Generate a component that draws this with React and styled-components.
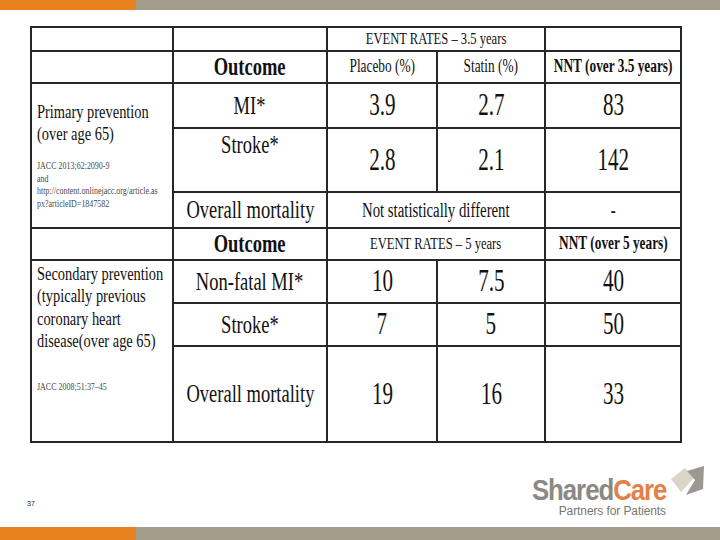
import React from "react"
import styled, { createGlobalStyle } from "styled-components"

const GlobalStyle = createGlobalStyle`
  html, body {
    margin: 0;
    padding: 0;
    background: #fff;
  }
  body {
    font-family: "Liberation Serif", "Times New Roman", serif;
    color: #111;
  }
`

const Page = styled.div`
  width: 720px;
  height: 540px;
  display: flex;
  flex-direction: column;
  overflow: hidden;
  background: #fff;
`

// orange + grey strip, top and bottom
const Bar = styled.div`
  height: ${p => p.h}px;
  flex-shrink: 0;
  background: linear-gradient(to right, #e8821f 0, #e8821f 136px, #a39b8b 136px);
`

const Main = styled.div`
  flex: 1;
  padding: 16px 0 0 30px;
`

const Grid = styled.div`
  display: grid;
  width: 648px;
  grid-template-columns: 140px 152px 108px 106px 134px;
  grid-template-rows: 22px 30px 43px 62px 34px 30px 41px 41px 94px;
  gap: 2px;
  padding: 2px;
  background: #272727;
`

const Cell = styled.div`
  background: #fff;
  display: flex;
  flex-direction: column;
  align-items: ${p => (p.left ? "flex-start" : "center")};
  justify-content: ${p => (p.top ? "flex-start" : "center")};
  padding-top: ${p => p.pt || 0}px;
  grid-column: ${p => (p.span ? `span ${p.span}` : "auto")};
  grid-row: ${p => (p.rows ? `span ${p.rows}` : "auto")};
  overflow: visible;
  min-width: 0;
`

// the slide is squeezed horizontally, so the type is narrowed
const Txt = styled.span`
  display: inline-block;
  white-space: nowrap;
  font-size: ${p => p.size || 17}px;
  font-weight: ${p => (p.bold ? 700 : 400)};
  line-height: ${p => p.lh || 1.1};
  color: ${p => p.color || "#111"};
  transform: scaleX(${p => p.sx || 0.74});
  transform-origin: ${p => (p.left ? "left center" : "center")};
`

const LeftBlock = styled.div`
  padding-left: 5px;
  display: flex;
  flex-direction: column;
  align-items: flex-start;
`

const Ref = styled.div`
  margin-top: ${p => p.mt || 0}px;
  display: flex;
  flex-direction: column;
  align-items: flex-start;
`

const Footer = styled.div`
  height: 84px;
  flex-shrink: 0;
  display: flex;
  align-items: flex-end;
  justify-content: space-between;
  padding: 0 14px 9px 27px;
  box-sizing: border-box;
`

const PageNum = styled.div`
  font-family: "Liberation Sans", Arial, sans-serif;
  font-size: 7px;
  color: #222;
  margin-bottom: 11px;
`

const Logo = styled.div`
  display: flex;
  align-items: flex-start;
  gap: 4px;
`

const LogoText = styled.div`
  display: flex;
  flex-direction: column;
  align-items: flex-end;
  margin-top: 10px;
`

const Brand = styled.div`
  font-family: "Liberation Sans", Arial, sans-serif;
  font-weight: 700;
  font-size: 30px;
  line-height: 30px;
  letter-spacing: -1.2px;
  color: #8c8883;
  transform: scaleX(0.86);
  transform-origin: right center;
  span {
    color: #e1804a;
  }
`

const Tagline = styled.div`
  font-family: "Liberation Sans", Arial, sans-serif;
  font-size: 12px;
  line-height: 13px;
  color: #7a7672;
  letter-spacing: -0.1px;
`

const Num = ({ children }) => (
  <Cell>
    <Txt size={31} sx={0.68}>{children}</Txt>
  </Cell>
)

const Label = ({ children, top, pt }) => (
  <Cell top={top} pt={pt}>
    <Txt size={25}>{children}</Txt>
  </Cell>
)

const Note = ({ children }) => (
  <Txt size={10.5} lh={1.2} sx={0.76} color="#4a4a4a" left>
    {children}
  </Txt>
)

export default function App() {
  return (
    <Page>
      <GlobalStyle />
      <Bar h={10} />
      <Main>
        <Grid>
          {/* header rows, 3.5 years */}
          <Cell />
          <Cell />
          <Cell span={2}>
            <Txt size={17}>EVENT RATES – 3.5 years</Txt>
          </Cell>
          <Cell />

          <Cell />
          <Cell>
            <Txt size={25} bold>Outcome</Txt>
          </Cell>
          <Cell>
            <Txt size={18}>Placebo (%)</Txt>
          </Cell>
          <Cell>
            <Txt size={18}>Statin (%)</Txt>
          </Cell>
          <Cell>
            <Txt size={18} bold>NNT (over 3.5 years)</Txt>
          </Cell>

          {/* primary prevention */}
          <Cell rows={3} left top pt={17}>
            <LeftBlock>
              <Txt size={19.5} lh={1.13} left>Primary prevention</Txt>
              <Txt size={19.5} lh={1.13} left>(over age 65)</Txt>
              <Ref mt={15}>
                <Note>JACC 2013;62:2090-9</Note>
                <Note>and</Note>
                <Note>http://content.onlinejacc.org/article.as</Note>
                <Note>px?articleID=1847582</Note>
              </Ref>
            </LeftBlock>
          </Cell>
          <Label>MI*</Label>
          <Num>3.9</Num>
          <Num>2.7</Num>
          <Num>83</Num>

          <Label top pt={2}>Stroke*</Label>
          <Num>2.8</Num>
          <Num>2.1</Num>
          <Num>142</Num>

          <Label>Overall mortality</Label>
          <Cell span={2}>
            <Txt size={20}>Not statistically different</Txt>
          </Cell>
          <Cell>
            <Txt size={20} bold>-</Txt>
          </Cell>

          {/* header row, 5 years */}
          <Cell />
          <Cell>
            <Txt size={25} bold>Outcome</Txt>
          </Cell>
          <Cell span={2}>
            <Txt size={17}>EVENT RATES – 5 years</Txt>
          </Cell>
          <Cell>
            <Txt size={18} bold>NNT (over 5 years)</Txt>
          </Cell>

          {/* secondary prevention */}
          <Cell rows={3} left top pt={2}>
            <LeftBlock>
              <Txt size={19.5} lh={1.15} left>Secondary prevention</Txt>
              <Txt size={19.5} lh={1.15} left>(typically previous</Txt>
              <Txt size={19.5} lh={1.15} left>coronary heart</Txt>
              <Txt size={19.5} lh={1.15} left>disease(over age 65)</Txt>
              <Ref mt={28}>
                <Note>JACC 2008;51:37–45</Note>
              </Ref>
            </LeftBlock>
          </Cell>
          <Label>Non-fatal MI*</Label>
          <Num>10</Num>
          <Num>7.5</Num>
          <Num>40</Num>

          <Label>Stroke*</Label>
          <Num>7</Num>
          <Num>5</Num>
          <Num>50</Num>

          <Label>Overall mortality</Label>
          <Num>19</Num>
          <Num>16</Num>
          <Num>33</Num>
        </Grid>
      </Main>
      <Footer>
        <PageNum>37</PageNum>
        <Logo>
          <LogoText>
            <Brand>
              Shared<span>Care</span>
            </Brand>
            <Tagline>Partners for Patients</Tagline>
          </LogoText>
          <svg width="36" height="34" viewBox="0 0 36 34">
            <polygon points="1,14 15,3 24,13 11,27" fill="#d9d6c8" />
            <polygon points="17,6 34,1 33,24 16,30 25,15" fill="#9b9892" />
          </svg>
        </Logo>
      </Footer>
      <Bar h={13} />
    </Page>
  )
}
